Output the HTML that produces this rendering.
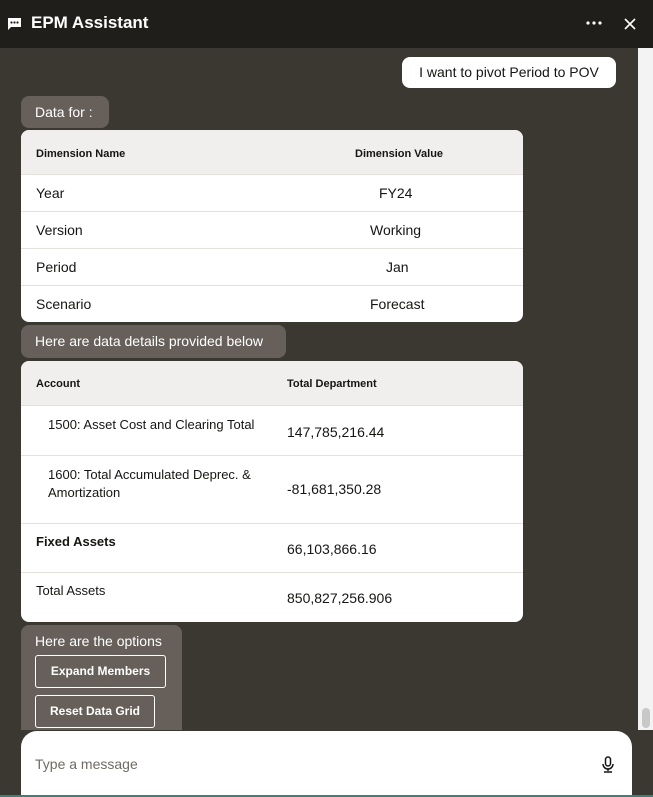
<!DOCTYPE html>
<html><head><style>
*{box-sizing:border-box;margin:0;padding:0}
body{width:653px;height:797px;overflow:hidden;background:#3b3731;font-family:"Liberation Sans",sans-serif;position:relative}
.hdr{position:absolute;left:0;top:0;width:653px;height:48px;background:#201e1b;color:#fff}
.hdr .t{position:absolute;left:31px;top:13px;font-size:17px;font-weight:bold}
.sb{position:absolute;left:638px;top:48px;width:15px;height:682px;background:#f3f3f3}
.thumb{position:absolute;left:642px;top:708px;width:8px;height:20px;background:#c8c8c8;border-radius:4px}
.ub{position:absolute;left:402px;top:57px;width:214px;height:31px;background:#fff;border-radius:8px;font-size:14px;color:#161513;line-height:31px;text-align:center}
.bb{position:absolute;background:#67605a;color:#fff;font-size:14px;border-radius:8px}
.tb{position:absolute;left:21px;width:502px;background:#fff;border-radius:8px;overflow:hidden;font-size:14px;color:#161513}
.th{background:#f1efed;height:44px;font-size:11px;font-weight:bold;position:relative}
.r{position:relative;border-top:1px solid #e4e1dd}
.c{position:absolute}
.btn{position:absolute;left:35px;border:1px solid #fff;border-radius:3px;color:#fff;font-size:12px;font-weight:bold;text-align:center}
.inp{position:absolute;left:21px;top:731px;width:611px;height:66px;background:#fff;border-radius:16px 16px 0 0}
</style></head><body>
<div class="hdr">
<svg style="position:absolute;left:7px;top:17px" width="15" height="14" viewBox="0 0 15 14"><path d="M1 1h13v9H4l-3 3z" fill="#fff"/><circle cx="4.5" cy="5.5" r="1.1" fill="#201e1b"/><circle cx="7.5" cy="5.5" r="1.1" fill="#201e1b"/><circle cx="10.5" cy="5.5" r="1.1" fill="#201e1b"/></svg>
<div class="t">EPM Assistant</div>
<svg style="position:absolute;left:586px;top:21px" width="16" height="4"><circle cx="2" cy="2" r="1.6" fill="#fff"/><circle cx="8" cy="2" r="1.6" fill="#fff"/><circle cx="14" cy="2" r="1.6" fill="#fff"/></svg>
<svg style="position:absolute;left:624px;top:18px" width="12" height="12"><path d="M1 1L11 11M11 1L1 11" stroke="#fff" stroke-width="1.6"/></svg>
</div>
<div class="sb"></div><div class="thumb"></div>
<div class="ub">I want to pivot Period to POV</div>
<div class="bb" style="left:21px;top:96px;width:88px;height:32px;line-height:32px;padding-left:14px">Data for :</div>
<div class="tb" style="top:130px;height:192px">
<div class="th"><span class="c" style="left:15px;top:18px">Dimension Name</span><span class="c" style="left:334px;top:18px">Dimension Value</span></div>
<div class="r" style="height:37px"><span class="c" style="left:15px;top:10px">Year</span><span class="c" style="left:358px;top:10px">FY24</span></div>
<div class="r" style="height:37px"><span class="c" style="left:15px;top:10px">Version</span><span class="c" style="left:349px;top:10px">Working</span></div>
<div class="r" style="height:37px"><span class="c" style="left:15px;top:10px">Period</span><span class="c" style="left:365px;top:10px">Jan</span></div>
<div class="r" style="height:37px"><span class="c" style="left:15px;top:10px">Scenario</span><span class="c" style="left:349px;top:10px">Forecast</span></div>
</div>
<div class="bb" style="left:21px;top:325px;width:265px;height:33px;line-height:32px;padding-left:14px">Here are data details provided below</div>
<div class="tb" style="top:361px;height:261px">
<div class="th"><span class="c" style="left:15px;top:17px">Account</span><span class="c" style="left:266px;top:17px">Total Department</span></div>
<div class="r" style="height:50px;font-size:13px"><span class="c" style="left:27px;top:11px">1500: Asset Cost and Clearing Total</span><span class="c" style="left:266px;top:18px;font-size:14px">147,785,216.44</span></div>
<div class="r" style="height:68px;font-size:13px"><span class="c" style="left:27px;top:10px;line-height:18px">1600: Total Accumulated Deprec. &amp;<br>Amortization</span><span class="c" style="left:266px;top:25px;font-size:14px">-81,681,350.28</span></div>
<div class="r" style="height:49px;font-size:13px"><span class="c" style="left:15px;top:10px;font-weight:bold">Fixed Assets</span><span class="c" style="left:266px;top:17px;font-size:14px">66,103,866.16</span></div>
<div class="r" style="height:50px;font-size:13px"><span class="c" style="left:15px;top:10px">Total Assets</span><span class="c" style="left:266px;top:17px;font-size:14px">850,827,256.906</span></div>
</div>
<div class="bb" style="left:21px;top:625px;width:161px;height:105px;border-radius:8px 8px 0 0"><span class="c" style="left:14px;top:8px">Here are the options</span></div>
<div class="btn" style="top:655px;width:131px;height:33px;line-height:31px">Expand Members</div>
<div class="btn" style="top:695px;width:120px;height:33px;line-height:31px">Reset Data Grid</div>
<div class="inp"><span class="c" style="left:14px;top:25px;font-size:14px;color:#6f6a65">Type a message</span>
<svg style="position:absolute;left:580px;top:25px" width="14" height="18" viewBox="0 0 14 18"><rect x="4.5" y="1" width="5" height="9" rx="2.5" fill="none" stroke="#161513" stroke-width="1.5"/><path d="M2 8a5 5 0 0 0 10 0M7 13v2M3 16h8" fill="none" stroke="#161513" stroke-width="1.5"/></svg></div>
<div style="position:absolute;left:0;top:795px;width:653px;height:2px;background:#3d7f7a"></div>
</body></html>
